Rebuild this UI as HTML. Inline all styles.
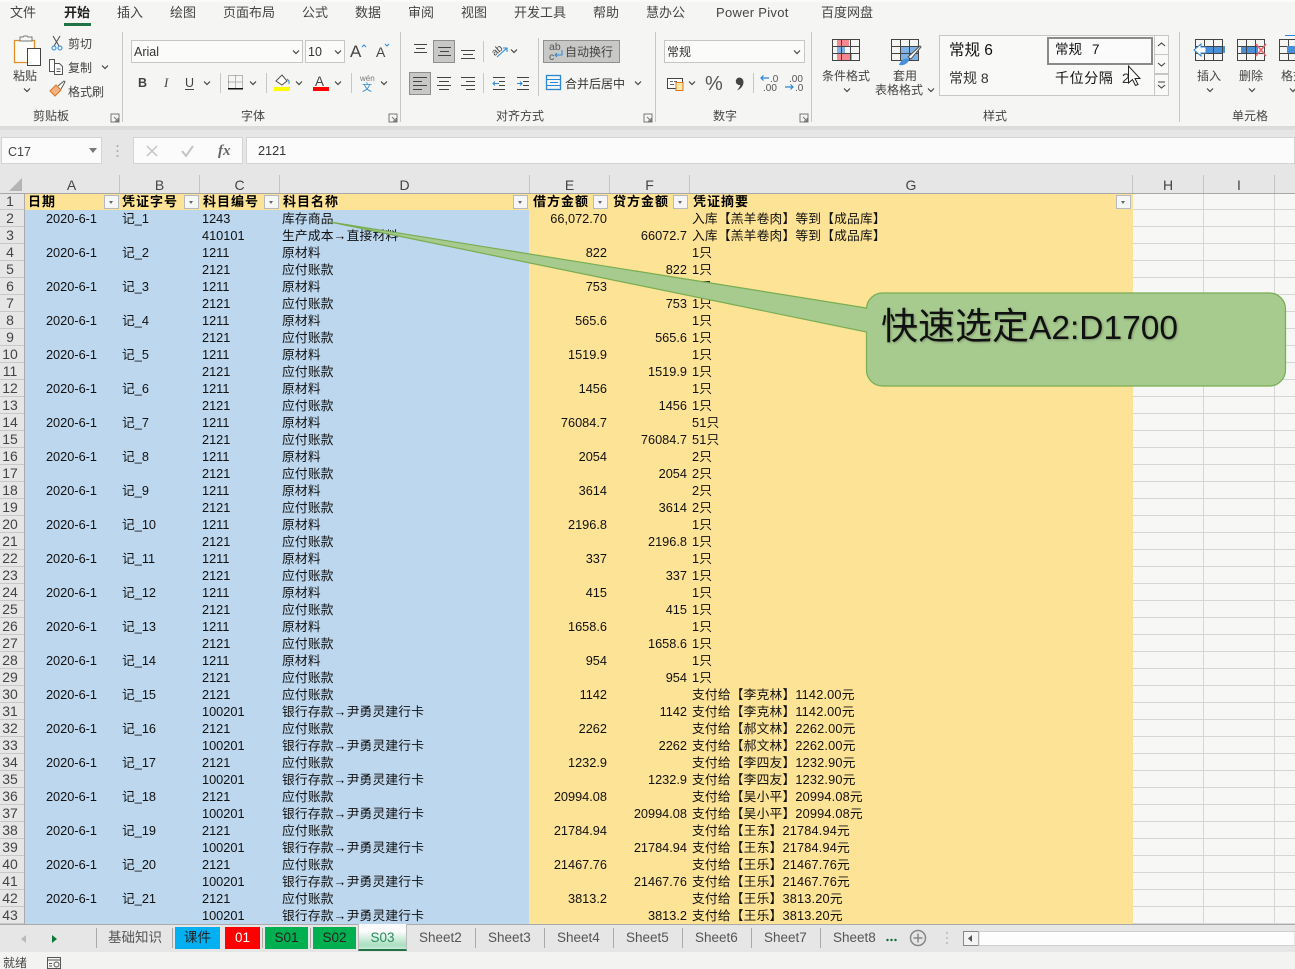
<!DOCTYPE html>
<html lang="zh">
<head>
<meta charset="utf-8">
<title>Excel</title>
<style>
html,body{margin:0;padding:0;width:1295px;height:969px;overflow:hidden;background:#f5f5f3}
body{position:relative;font-family:"Liberation Sans","Noto Sans CJK SC",sans-serif;color:#111}
.abs{position:absolute}
svg text{font-family:"Liberation Sans","Noto Sans CJK SC",sans-serif}
#grid{position:absolute;left:0;top:193px;border-collapse:separate;border-spacing:0;table-layout:fixed;width:1133px;font-size:12.75px}
#grid td,#grid th{height:17px;line-height:17px;padding:0;white-space:nowrap;overflow:hidden;font-weight:normal;text-align:left}
#grid th{text-align:center;font-size:14px;color:#444;padding-right:5px;box-sizing:border-box}
#grid td{padding-left:3px}
#grid td.a{text-align:right;padding-right:22px;padding-left:0}
#grid td.r{text-align:right;padding-right:2px;padding-left:0}
#grid td:nth-child(5),#grid td:nth-child(8){letter-spacing:.17px}
#grid tr.h td{font-weight:bold;font-size:13px;letter-spacing:1px;color:#000}
#grid tr.h td:nth-child(n+4){padding-left:4px}
.f{position:absolute;top:195px;width:13px;height:12px;background:#f6f6f6;border:1px solid #b5b9c0}
.f:after{content:"";position:absolute;left:4px;top:5px;border:2.500px solid transparent;border-top:3px solid #666;border-bottom:0}
.ch{position:absolute;top:175px;height:18px;line-height:20px;font-size:14px;color:#444;text-align:center;border-right:1px solid #c4c4c4;box-sizing:border-box}
.tab{position:absolute;top:927px;height:22px;line-height:22px;font-size:13.5px;text-align:center;color:#222}
.st{position:absolute;top:926px;height:24px;line-height:23px;font-size:13.5px;color:#555}
.sp{position:absolute;top:928px;width:1px;height:20px;background:#aaa}
</style>
</head>
<body>

<svg class="abs" style="left:0;top:0" width="1295" height="130" viewBox="0 0 1295 130">
<defs>
<path id="c" d="M-3-1.500 0 1.500 3-1.500" fill="none" stroke="#444" stroke-width="1.200"/>
<path id="l" d="M0 0h8v8h-8zM3 3l4 4M7 4v3h-3" fill="none" stroke="#777" stroke-width="1"/>
</defs>
<rect width="1295" height="127" fill="#f5f5f3"/>
<rect width="1295" height="2" fill="#fafafa"/>
<rect y="126" width="1295" height="4" fill="#dcdcdc"/>
<g font-size="13" fill="#444">
<text x="10" y="17">文件</text>
<text x="64" y="17" font-weight="bold" fill="#222">开始</text>
<text x="117" y="17">插入</text>
<text x="170" y="17">绘图</text>
<text x="223" y="17">页面布局</text>
<text x="302" y="17">公式</text>
<text x="355" y="17">数据</text>
<text x="408" y="17">审阅</text>
<text x="461" y="17">视图</text>
<text x="514" y="17">开发工具</text>
<text x="593" y="17">帮助</text>
<text x="646" y="17">慧办公</text>
<text x="716" y="17" letter-spacing=".3">Power Pivot</text>
<text x="821" y="17">百度网盘</text>
</g>
<rect x="64" y="23" width="27" height="3" fill="#217346"/>
<g fill="#c6c6c6">
<rect x="122" y="32" width="1" height="90"/><rect x="400" y="32" width="1" height="90"/>
<rect x="655" y="32" width="1" height="90"/><rect x="811" y="32" width="1" height="90"/>
<rect x="1179" y="32" width="1" height="90"/>
<rect x="220" y="73" width="1" height="20"/><rect x="266" y="73" width="1" height="20"/><rect x="351" y="73" width="1" height="20"/>
<rect x="483" y="41" width="1" height="21"/><rect x="483" y="73" width="1" height="20"/><rect x="538" y="38" width="1" height="58"/>
<rect x="753" y="73" width="1" height="20"/>
</g>

<!-- clipboard -->
<path d="M14.500 40.500h20v22h-20z" fill="#fbfbf8" stroke="#e0902a" stroke-width="1.300"/>
<path d="M20 40v-3h3l1-1h3l1 1h4v4H20z" fill="#f7f7f5" stroke="#777"/>
<rect x="27.500" y="48.500" width="13" height="17" fill="#fff" stroke="#444"/>
<g font-size="12" fill="#444">
<text x="13" y="80">粘贴</text>
<text x="68" y="48">剪切</text>
<text x="68" y="72">复制</text>
<text x="68" y="96">格式刷</text>
</g>
<use href="#c" x="27" y="90"/><use href="#c" x="105" y="67"/>
<path d="M60 36 54 46M53 36l6 10" stroke="#555" fill="none" stroke-width="1.100"/>
<circle cx="54" cy="48" r="2" fill="none" stroke="#2b88d8"/><circle cx="60" cy="48" r="2" fill="none" stroke="#2b88d8"/>
<path d="M49.500 59.500h5v12h-5zM54.500 63.500h5l3 3v8h-8zM56.500 69h4M56.500 71.500h4" fill="#fdfdfd" stroke="#555"/>
<path d="M50 91l6-6 5 5-6 6z" fill="#f4b183" stroke="#d9741f"/><path d="M58 86l6-5 1 1-4 7" fill="#fff" stroke="#555"/>
<text x="33" y="120" font-size="12" fill="#444">剪贴板</text>
<use href="#l" x="111" y="114"/>

<!-- font -->
<rect x="131.500" y="40.500" width="171" height="22" fill="#fbfbf9" stroke="#c6c6c6"/>
<text x="134" y="56" font-size="12.500" fill="#333">Arial</text>
<use href="#c" x="296" y="52"/>
<rect x="305.500" y="40.500" width="39" height="22" fill="#fbfbf9" stroke="#c6c6c6"/>
<text x="308" y="56" font-size="12.500" fill="#333">10</text>
<use href="#c" x="338" y="52"/>
<text x="350" y="57" font-size="17" fill="#444">A</text>
<path d="M362 47l2-2 2 2" stroke="#2b88d8" fill="none"/>
<text x="376" y="57" font-size="14" fill="#444">A</text>
<path d="M385 44l2 2 2-2" stroke="#2b88d8" fill="none"/>
<text x="138" y="87" font-size="12.500" font-weight="bold" fill="#444">B</text>
<text x="164" y="87" font-size="13" font-style="italic" fill="#444" style="font-family:'Liberation Serif',serif">I</text>
<text x="185" y="87" font-size="12.500" fill="#444">U</text>
<rect x="185" y="89" width="9" height="1" fill="#444"/>
<use href="#c" x="207" y="83"/><use href="#c" x="253" y="83"/><use href="#c" x="299" y="83"/><use href="#c" x="338" y="83"/><use href="#c" x="384" y="83"/>
<path d="M228.500 75.500h14v13h-14zM235.500 75.500v13M228.500 82h14" fill="none" stroke="#777" stroke-dasharray="1 1"/>
<rect x="228" y="88" width="15" height="1.500" fill="#111"/>
<path d="M276 81l6-6 5 6-5 4z" fill="#fff" stroke="#555"/><path d="M287 79l2 2v3" stroke="#2b88d8" fill="none"/>
<rect x="274" y="87" width="16" height="4" fill="#ffff00"/>
<text x="315" y="86" font-size="13.500" fill="#444">A</text>
<rect x="313" y="87" width="16" height="4" fill="#ff0000"/>
<text x="360" y="81" font-size="8" fill="#777">wén</text>
<text x="362" y="91" font-size="10" fill="#2b88d8">文</text>
<text x="241" y="120" font-size="12" fill="#444">字体</text>
<use href="#l" x="389" y="114"/>

<!-- alignment -->
<rect x="433.500" y="40.500" width="21" height="22" fill="#c8c8c6" stroke="#8f8f8f"/>
<rect x="409.500" y="72.500" width="21" height="22" fill="#c8c8c6" stroke="#8f8f8f"/>
<rect x="543.500" y="40.500" width="76" height="22" fill="#c8c8c6" stroke="#8f8f8f"/>
<g stroke="#444" fill="none">
<path d="M414 44.500h13M416 48.500h9M414 52.500h13"/>
<path d="M438 47.500h13M440 51.500h9M438 55.500h13"/>
<path d="M461 50.500h14M463 54.500h10M461 58.500h14"/>
<path d="M413 77.500h14M413 81.500h9M413 85.500h14M413 89.500h9"/>
<path d="M437 77.500h14M439 81.500h10M437 85.500h14M439 89.500h10"/>
<path d="M461 77.500h14M466 81.500h9M461 85.500h14M466 89.500h9"/>
<path d="M505 77.500h-12M505 81.500h-6M505 85.500h-6M505 89.500h-12"/>
<path d="M529 77.500h-12M529 81.500h-6M529 85.500h-6M529 89.500h-12"/>
</g>
<path d="M499 83.500h-6m2-2-2 2 2 2M517 83.500h5m-2-2 2 2-2 2" stroke="#2b88d8" fill="none"/>
<text x="491" y="54" font-size="10" fill="#444" transform="rotate(-40 496 50)">ab</text>
<path d="M497 57l10-9m-4 0h4v4" stroke="#2b88d8" fill="none"/>
<use href="#c" x="514" y="51"/>
<text x="549" y="50" font-size="10.500" fill="#555">ab</text>
<text x="549" y="60" font-size="10.500" fill="#555">c</text>
<path d="M562 50v5h-7m2-2-2 2 2 2" stroke="#2b88d8" fill="none"/>
<text x="565" y="56" font-size="12" fill="#444">自动换行</text>
<rect x="546.500" y="75.500" width="14" height="14" fill="none" stroke="#2b88d8" stroke-width="1.300"/>
<path d="M547 79.500h14M547 85.500h14M550 82.500h8" stroke="#2b88d8" fill="none"/>
<text x="565" y="88" font-size="12" fill="#333">合并后居中</text>
<use href="#c" x="638" y="83"/>
<text x="496" y="120" font-size="12" fill="#444">对齐方式</text>
<use href="#l" x="644" y="114"/>

<!-- number -->
<rect x="664.500" y="40.500" width="140" height="22" fill="#fbfbf9" stroke="#c6c6c6"/>
<text x="667" y="56" font-size="12" fill="#333">常规</text>
<use href="#c" x="797" y="52"/>
<rect x="667.500" y="78.500" width="15" height="10" fill="#fff" stroke="#444"/>
<path d="M670 81.500h3M674 81.500h3M670 84.500h4" stroke="#666"/>
<path d="M676 82.500h7v8h-7z" fill="#fde9a8" stroke="#e0761f"/>
<use href="#c" x="692" y="83"/>
<text x="705" y="90" font-size="20" fill="#555">%</text>
<path d="M739 77.500c2.800 0 4.500 2 4.500 4.500 0 4-3 7-6.500 8.500 1.600-2 3-3.800 3.200-5.500a3.500 3.500 0 0 1-1.200-7.500z" fill="#444"/>
<text x="770" y="82" font-size="10" fill="#555">.0</text>
<text x="763" y="91" font-size="10" fill="#555">.00</text>
<path d="M769 78h-8m2.500-2.500-2.500 2.500 2.500 2.500" stroke="#2b88d8" fill="none" stroke-width="1.200"/>
<text x="789" y="82" font-size="10" fill="#555">.00</text>
<text x="795" y="91" font-size="10" fill="#555">.0</text>
<path d="M785 87h8m-2.500-2.500 2.500 2.500-2.500 2.500" stroke="#2b88d8" fill="none" stroke-width="1.200"/>
<text x="713" y="120" font-size="12" fill="#444">数字</text>
<use href="#l" x="800" y="114"/>

<!-- conditional -->
<rect x="837" y="39" width="12" height="7" fill="#f8888f"/><rect x="837" y="46" width="8" height="7" fill="#7fb3e6"/><rect x="837" y="53" width="15" height="7" fill="#f8888f"/>
<path d="M832.500 39.500h27v21h-27zM832.500 46.500h27M832.500 53.500h27M841.500 39.500v21M850.500 39.500v21" fill="none" stroke="#444"/>
<text x="822" y="80" font-size="12" fill="#444">条件格式</text>
<use href="#c" x="847" y="90"/>
<!-- table format -->
<rect x="900" y="46" width="18" height="14" fill="#7fb3e6"/>
<path d="M891.500 39.500h27v21h-27zM891.500 46.500h27M891.500 53.500h27M900.500 39.500v21M909.500 39.500v21" fill="none" stroke="#444"/>
<path d="M908 57l12-11 1 1-10 12z" fill="#fff" stroke="#555"/>
<path d="M899 65c2-6 7-7 10-6 0 4-5 7-10 6z" fill="#4a90d9"/>
<text x="893" y="80" font-size="12" fill="#444">套用</text>
<text x="875" y="94" font-size="12" fill="#444">表格格式</text>
<use href="#c" x="931" y="90"/>
<!-- gallery -->
<rect x="939.500" y="35.500" width="215" height="60" fill="#f9f9f7" stroke="#c6c6c6"/>
<text x="949" y="55" font-size="15.500" fill="#111">常规 6</text>
<text x="949" y="83" font-size="14" fill="#333">常规 8</text>
<rect x="1048" y="38" width="104" height="26" fill="#fbfbfb" stroke="#8a8a8a" stroke-width="2"/>
<text x="1055" y="54" font-size="13.500" fill="#111">常规</text>
<text x="1092" y="54" font-size="13.500" fill="#111">7</text>
<text x="1055" y="83" font-size="14" letter-spacing="0.600" fill="#111">千位分隔</text>
<text x="1122" y="83" font-size="14" fill="#333">2</text>
<rect x="1154.500" y="35.500" width="14" height="19" fill="#f9f9f7" stroke="#c6c6c6"/>
<rect x="1154.500" y="54.500" width="14" height="19" fill="#f9f9f7" stroke="#c6c6c6"/>
<rect x="1154.500" y="74.500" width="14" height="21" fill="#f9f9f7" stroke="#c6c6c6"/>
<path d="M1158 46l3.500-3 3.500 3M1158 63l3.500 3 3.500-3M1158 82h7M1158 85l3.500 3 3.500-3" fill="none" stroke="#444" stroke-width="1.100"/>
<path d="M1128.500 66v17l4-3.500 3 6 2.500-1-3-6h5z" fill="#fff" stroke="#222"/>
<text x="983" y="120" font-size="12" fill="#444">样式</text>
<!-- insert -->
<rect x="1204" y="46" width="21" height="7" fill="#4a90d9"/>
<path d="M1195.500 39.500h27v21h-27zM1195.500 46.500h27M1195.500 53.500h27M1204.500 39.500v21M1213.500 39.500v21" fill="none" stroke="#444"/>
<path d="M1194 50l7-6v3h5v6h-5v3z" fill="#fff" stroke="#2b88d8"/>
<text x="1197" y="80" font-size="12" fill="#444">插入</text>
<use href="#c" x="1210" y="90"/>
<!-- delete -->
<rect x="1241" y="46" width="17" height="7" fill="#4a90d9"/>
<path d="M1237.500 39.500h27v21h-27zM1237.500 46.500h27M1237.500 53.500h27M1246.500 39.500v21M1255.500 39.500v21" fill="none" stroke="#444"/>
<path d="M1256 44l10 12M1266 44l-10 12" stroke="#f0606a" stroke-width="1.500"/>
<text x="1239" y="80" font-size="12" fill="#444">删除</text>
<use href="#c" x="1252" y="90"/>
<!-- format -->
<path d="M1279.500 39.500h27v21h-27zM1279.500 46.500h27M1279.500 53.500h27M1288.500 39.500v21" fill="none" stroke="#444"/>
<rect x="1287" y="46" width="10" height="7" fill="#4a90d9"/>
<path d="M1285 35.500h10" stroke="#2b88d8"/>
<text x="1281" y="80" font-size="12" fill="#444">格式</text>
<use href="#c" x="1293" y="90"/>
<text x="1232" y="120" font-size="12" fill="#444">单元格</text>
</svg>

<!-- formula bar -->
<div class="abs" style="left:0;top:130px;width:1295px;height:46px;background:#e6e6e6"></div>
<div class="abs" style="left:1px;top:137px;width:101px;height:27px;background:#fbfbfb;border:1px solid #d4d4d4;box-sizing:border-box;font-size:12.500px;line-height:28px;padding-left:6px;color:#444">C17</div>
<div class="abs" style="left:89px;top:148px;border:4px solid transparent;border-top:5px solid #777;border-bottom:0"></div>
<div class="abs" style="left:133px;top:137px;width:110px;height:27px;background:#fbfbfb;border:1px solid #d4d4d4;box-sizing:border-box"></div>
<div class="abs" style="left:246px;top:137px;width:1049px;height:27px;background:#fbfbfb;border:1px solid #d4d4d4;box-sizing:border-box;font-size:12.700px;line-height:26px;padding-left:11px;color:#333">2121</div>
<svg class="abs" style="left:110px;top:140px" width="130" height="22" viewBox="110 140 130 22">
<path d="M147 146l10 10M157 146l-10 10" stroke="#c4c4c4" stroke-width="1.500"/>
<path d="M182 151l4 5 7-10" stroke="#c4c4c4" stroke-width="2" fill="none"/>
<circle cx="117.500" cy="146" r="1" fill="#aaa"/><circle cx="117.500" cy="151" r="1" fill="#aaa"/><circle cx="117.500" cy="156" r="1" fill="#aaa"/>
<text x="218" y="155" font-size="15" font-style="italic" font-weight="bold" fill="#666" style="font-family:'Liberation Serif',serif">fx</text>
</svg>

<!-- column headers -->
<div class="abs" style="left:0;top:175px;width:1295px;height:18px;background:#e6e6e6"></div>
<div class="abs" style="left:9px;top:178px;width:0;height:0;border-left:13px solid transparent;border-bottom:13px solid #b4b4b4"></div>
<div class="ch" style="left:25px;width:95px;padding-right:1px">A</div>
<div class="ch" style="left:120px;width:80px">B</div>
<div class="ch" style="left:200px;width:80px">C</div>
<div class="ch" style="left:280px;width:250px">D</div>
<div class="ch" style="left:530px;width:80px">E</div>
<div class="ch" style="left:610px;width:80px">F</div>
<div class="ch" style="left:690px;width:443px">G</div>
<div class="ch" style="left:1133px;width:71px">H</div>
<div class="ch" style="left:1204px;width:71px">I</div>
<div class="abs" style="left:0;top:193px;width:1295px;height:1px;background:#a8a8a8"></div>

<!-- sheet backgrounds -->
<div class="abs" style="left:0;top:194px;width:25px;height:730px;background:#e6e6e6 repeating-linear-gradient(to bottom,transparent 0,transparent 15px,#c8c8c8 15px,#c8c8c8 16px,transparent 16px,transparent 17px);background-position:0 0"></div>
<div class="abs" style="left:24px;top:194px;width:1px;height:730px;background:#aaa"></div>
<div class="abs" style="left:25px;top:194px;width:504px;height:730px;background:#bdd7ee"></div>
<div class="abs" style="left:529px;top:194px;width:604px;height:730px;background:#fde396"></div>
<div class="abs" style="left:25px;top:194px;width:504px;height:16px;background:#fde396"></div>
<div class="abs" style="left:1133px;top:194px;width:162px;height:730px;background-color:#f7f7f5;background-image:repeating-linear-gradient(to bottom,transparent 0,transparent 15px,#d6d6d6 15px,#d6d6d6 16px,transparent 16px,transparent 17px),linear-gradient(#d6d6d6,#d6d6d6),linear-gradient(#d6d6d6,#d6d6d6);background-size:100% 100%,1px 100%,1px 100%;background-position:0 0,70px 0,141px 0;background-repeat:no-repeat"></div>

<table id="grid">
<colgroup><col style="width:25px"><col style="width:94px"><col style="width:80px"><col style="width:80px"><col style="width:250px"><col style="width:80px"><col style="width:80px"><col style="width:444px"></colgroup>
<tr class="h"><th style="font-weight:normal">1</th><td>日期</td><td>凭证字号</td><td>科目编号</td><td>科目名称</td><td>借方金额</td><td>贷方金额</td><td>凭证摘要</td></tr>
<tr><th>2</th><td class="a">2020-6-1</td><td>记_1</td><td>1243</td><td>库存商品</td><td class="r">66,072.70</td><td class="r"></td><td>入库【羔羊卷肉】等到【成品库】</td></tr>
<tr><th>3</th><td class="a"></td><td></td><td>410101</td><td>生产成本→直接材料</td><td class="r"></td><td class="r">66072.7</td><td>入库【羔羊卷肉】等到【成品库】</td></tr>
<tr><th>4</th><td class="a">2020-6-1</td><td>记_2</td><td>1211</td><td>原材料</td><td class="r">822</td><td class="r"></td><td>1只</td></tr>
<tr><th>5</th><td class="a"></td><td></td><td>2121</td><td>应付账款</td><td class="r"></td><td class="r">822</td><td>1只</td></tr>
<tr><th>6</th><td class="a">2020-6-1</td><td>记_3</td><td>1211</td><td>原材料</td><td class="r">753</td><td class="r"></td><td>1只</td></tr>
<tr><th>7</th><td class="a"></td><td></td><td>2121</td><td>应付账款</td><td class="r"></td><td class="r">753</td><td>1只</td></tr>
<tr><th>8</th><td class="a">2020-6-1</td><td>记_4</td><td>1211</td><td>原材料</td><td class="r">565.6</td><td class="r"></td><td>1只</td></tr>
<tr><th>9</th><td class="a"></td><td></td><td>2121</td><td>应付账款</td><td class="r"></td><td class="r">565.6</td><td>1只</td></tr>
<tr><th>10</th><td class="a">2020-6-1</td><td>记_5</td><td>1211</td><td>原材料</td><td class="r">1519.9</td><td class="r"></td><td>1只</td></tr>
<tr><th>11</th><td class="a"></td><td></td><td>2121</td><td>应付账款</td><td class="r"></td><td class="r">1519.9</td><td>1只</td></tr>
<tr><th>12</th><td class="a">2020-6-1</td><td>记_6</td><td>1211</td><td>原材料</td><td class="r">1456</td><td class="r"></td><td>1只</td></tr>
<tr><th>13</th><td class="a"></td><td></td><td>2121</td><td>应付账款</td><td class="r"></td><td class="r">1456</td><td>1只</td></tr>
<tr><th>14</th><td class="a">2020-6-1</td><td>记_7</td><td>1211</td><td>原材料</td><td class="r">76084.7</td><td class="r"></td><td>51只</td></tr>
<tr><th>15</th><td class="a"></td><td></td><td>2121</td><td>应付账款</td><td class="r"></td><td class="r">76084.7</td><td>51只</td></tr>
<tr><th>16</th><td class="a">2020-6-1</td><td>记_8</td><td>1211</td><td>原材料</td><td class="r">2054</td><td class="r"></td><td>2只</td></tr>
<tr><th>17</th><td class="a"></td><td></td><td>2121</td><td>应付账款</td><td class="r"></td><td class="r">2054</td><td>2只</td></tr>
<tr><th>18</th><td class="a">2020-6-1</td><td>记_9</td><td>1211</td><td>原材料</td><td class="r">3614</td><td class="r"></td><td>2只</td></tr>
<tr><th>19</th><td class="a"></td><td></td><td>2121</td><td>应付账款</td><td class="r"></td><td class="r">3614</td><td>2只</td></tr>
<tr><th>20</th><td class="a">2020-6-1</td><td>记_10</td><td>1211</td><td>原材料</td><td class="r">2196.8</td><td class="r"></td><td>1只</td></tr>
<tr><th>21</th><td class="a"></td><td></td><td>2121</td><td>应付账款</td><td class="r"></td><td class="r">2196.8</td><td>1只</td></tr>
<tr><th>22</th><td class="a">2020-6-1</td><td>记_11</td><td>1211</td><td>原材料</td><td class="r">337</td><td class="r"></td><td>1只</td></tr>
<tr><th>23</th><td class="a"></td><td></td><td>2121</td><td>应付账款</td><td class="r"></td><td class="r">337</td><td>1只</td></tr>
<tr><th>24</th><td class="a">2020-6-1</td><td>记_12</td><td>1211</td><td>原材料</td><td class="r">415</td><td class="r"></td><td>1只</td></tr>
<tr><th>25</th><td class="a"></td><td></td><td>2121</td><td>应付账款</td><td class="r"></td><td class="r">415</td><td>1只</td></tr>
<tr><th>26</th><td class="a">2020-6-1</td><td>记_13</td><td>1211</td><td>原材料</td><td class="r">1658.6</td><td class="r"></td><td>1只</td></tr>
<tr><th>27</th><td class="a"></td><td></td><td>2121</td><td>应付账款</td><td class="r"></td><td class="r">1658.6</td><td>1只</td></tr>
<tr><th>28</th><td class="a">2020-6-1</td><td>记_14</td><td>1211</td><td>原材料</td><td class="r">954</td><td class="r"></td><td>1只</td></tr>
<tr><th>29</th><td class="a"></td><td></td><td>2121</td><td>应付账款</td><td class="r"></td><td class="r">954</td><td>1只</td></tr>
<tr><th>30</th><td class="a">2020-6-1</td><td>记_15</td><td>2121</td><td>应付账款</td><td class="r">1142</td><td class="r"></td><td>支付给【李克林】1142.00元</td></tr>
<tr><th>31</th><td class="a"></td><td></td><td>100201</td><td>银行存款→尹勇灵建行卡</td><td class="r"></td><td class="r">1142</td><td>支付给【李克林】1142.00元</td></tr>
<tr><th>32</th><td class="a">2020-6-1</td><td>记_16</td><td>2121</td><td>应付账款</td><td class="r">2262</td><td class="r"></td><td>支付给【郝文林】2262.00元</td></tr>
<tr><th>33</th><td class="a"></td><td></td><td>100201</td><td>银行存款→尹勇灵建行卡</td><td class="r"></td><td class="r">2262</td><td>支付给【郝文林】2262.00元</td></tr>
<tr><th>34</th><td class="a">2020-6-1</td><td>记_17</td><td>2121</td><td>应付账款</td><td class="r">1232.9</td><td class="r"></td><td>支付给【李四友】1232.90元</td></tr>
<tr><th>35</th><td class="a"></td><td></td><td>100201</td><td>银行存款→尹勇灵建行卡</td><td class="r"></td><td class="r">1232.9</td><td>支付给【李四友】1232.90元</td></tr>
<tr><th>36</th><td class="a">2020-6-1</td><td>记_18</td><td>2121</td><td>应付账款</td><td class="r">20994.08</td><td class="r"></td><td>支付给【吴小平】20994.08元</td></tr>
<tr><th>37</th><td class="a"></td><td></td><td>100201</td><td>银行存款→尹勇灵建行卡</td><td class="r"></td><td class="r">20994.08</td><td>支付给【吴小平】20994.08元</td></tr>
<tr><th>38</th><td class="a">2020-6-1</td><td>记_19</td><td>2121</td><td>应付账款</td><td class="r">21784.94</td><td class="r"></td><td>支付给【王东】21784.94元</td></tr>
<tr><th>39</th><td class="a"></td><td></td><td>100201</td><td>银行存款→尹勇灵建行卡</td><td class="r"></td><td class="r">21784.94</td><td>支付给【王东】21784.94元</td></tr>
<tr><th>40</th><td class="a">2020-6-1</td><td>记_20</td><td>2121</td><td>应付账款</td><td class="r">21467.76</td><td class="r"></td><td>支付给【王乐】21467.76元</td></tr>
<tr><th>41</th><td class="a"></td><td></td><td>100201</td><td>银行存款→尹勇灵建行卡</td><td class="r"></td><td class="r">21467.76</td><td>支付给【王乐】21467.76元</td></tr>
<tr><th>42</th><td class="a">2020-6-1</td><td>记_21</td><td>2121</td><td>应付账款</td><td class="r">3813.2</td><td class="r"></td><td>支付给【王乐】3813.20元</td></tr>
<tr><th>43</th><td class="a"></td><td></td><td>100201</td><td>银行存款→尹勇灵建行卡</td><td class="r"></td><td class="r">3813.2</td><td>支付给【王乐】3813.20元</td></tr>
</table>

<div class="f" style="left:104px"></div>
<div class="f" style="left:184px"></div>
<div class="f" style="left:264px"></div>
<div class="f" style="left:513px"></div>
<div class="f" style="left:593px"></div>
<div class="f" style="left:673px"></div>
<div class="f" style="left:1116px"></div>

<!-- callout -->
<svg class="abs" style="left:0;top:0;pointer-events:none" width="1295" height="969" viewBox="0 0 1295 969">
<path d="M330 222 866.500 308V309a16 16 0 0 1 16-16H1269.500a16 16 0 0 1 16 16V370a16 16 0 0 1-16 16H882.500a16 16 0 0 1-16-16V332Z" fill="#a7ca8f" stroke="#78ad52" stroke-width="1.200"/>
<text x="881" y="339" font-size="37" fill="#111" style="text-shadow:1px 1px 2px rgba(0,0,0,.25)">快速选定<tspan font-size="33.500">A2:D1700</tspan></text>
</svg>

<!-- sheet tabs -->
<div class="abs" style="left:0;top:924px;width:1295px;height:28px;background:#e6e6e6;border-top:1px solid #aaa;box-sizing:border-box"></div>
<div class="abs" style="left:21px;top:935px;border:4px solid transparent;border-right:5px solid #bbb;border-left:0"></div>
<div class="abs" style="left:52px;top:935px;border:4px solid transparent;border-left:5px solid #0a7a3b;border-right:0"></div>
<div class="sp" style="left:96px"></div>
<div class="st" style="left:108px">基础知识</div>
<div class="sp" style="left:172px"></div>
<div class="tab" style="left:175px;width:45px;background:#00b0f0">课件</div>
<div class="tab" style="left:225px;width:35px;background:#ff0000;color:#fff">01</div>
<div class="sp" style="left:262px"></div>
<div class="tab" style="left:265px;width:43px;background:#00b050">S01</div>
<div class="sp" style="left:310px"></div>
<div class="tab" style="left:313px;width:43px;background:#00b050">S02</div>
<div class="abs" style="left:358px;top:924px;width:47px;height:25px;background:linear-gradient(#fbfbfb 0,#fbfbfb 30%,#a9dfc0 85%,#c9ecd8 100%);border-bottom:2px solid #217346;border-left:1px solid #bbb;border-right:1px solid #bbb;text-align:center;font-size:13.500px;line-height:27px;color:#2a8a5c">S03</div>
<div class="st" style="left:419px">Sheet2</div><div class="sp" style="left:475px"></div>
<div class="st" style="left:488px">Sheet3</div><div class="sp" style="left:544px"></div>
<div class="st" style="left:557px">Sheet4</div><div class="sp" style="left:613px"></div>
<div class="st" style="left:626px">Sheet5</div><div class="sp" style="left:682px"></div>
<div class="st" style="left:695px">Sheet6</div><div class="sp" style="left:751px"></div>
<div class="st" style="left:764px">Sheet7</div><div class="sp" style="left:820px"></div>
<div class="st" style="left:833px">Sheet8</div>
<svg class="abs" style="left:880px;top:926px" width="415" height="26" viewBox="880 926 415 26">
<circle cx="887.500" cy="940" r="1.200" fill="#0a6b35"/><circle cx="891.500" cy="940" r="1.200" fill="#0a6b35"/><circle cx="895.500" cy="940" r="1.200" fill="#0a6b35"/>
<circle cx="918" cy="938" r="7.500" fill="none" stroke="#888" stroke-width="1.500"/>
<path d="M913.500 938h9M918 933.500v9" stroke="#888" stroke-width="1.500"/>
<circle cx="947" cy="933" r="1" fill="#bbb"/><circle cx="947" cy="938" r="1" fill="#bbb"/><circle cx="947" cy="943" r="1" fill="#bbb"/>
<rect x="963.500" y="931.500" width="15" height="14" fill="#f4f4f4" stroke="#888"/>
<path d="M972 935v7l-4-3.500z" fill="#555"/>
<rect x="979" y="931.500" width="316" height="14" fill="#fdfdfd" stroke="#d0d0d0"/>
</svg>

<!-- status bar -->
<div class="abs" style="left:0;top:952px;width:1295px;height:17px;background:#f3f3f1"></div>
<div class="abs" style="left:3px;top:954px;font-size:12px;line-height:18px;color:#444">就绪</div>
<svg class="abs" style="left:46px;top:956px" width="16" height="13" viewBox="0 0 16 13">
<path d="M1.500 1.500h13v11h-13zM1.500 4h13M3 7.500h3M3 10h3" fill="none" stroke="#555"/>
<circle cx="10.500" cy="8.500" r="2.500" fill="none" stroke="#555"/>
</svg>
</body>
</html>
